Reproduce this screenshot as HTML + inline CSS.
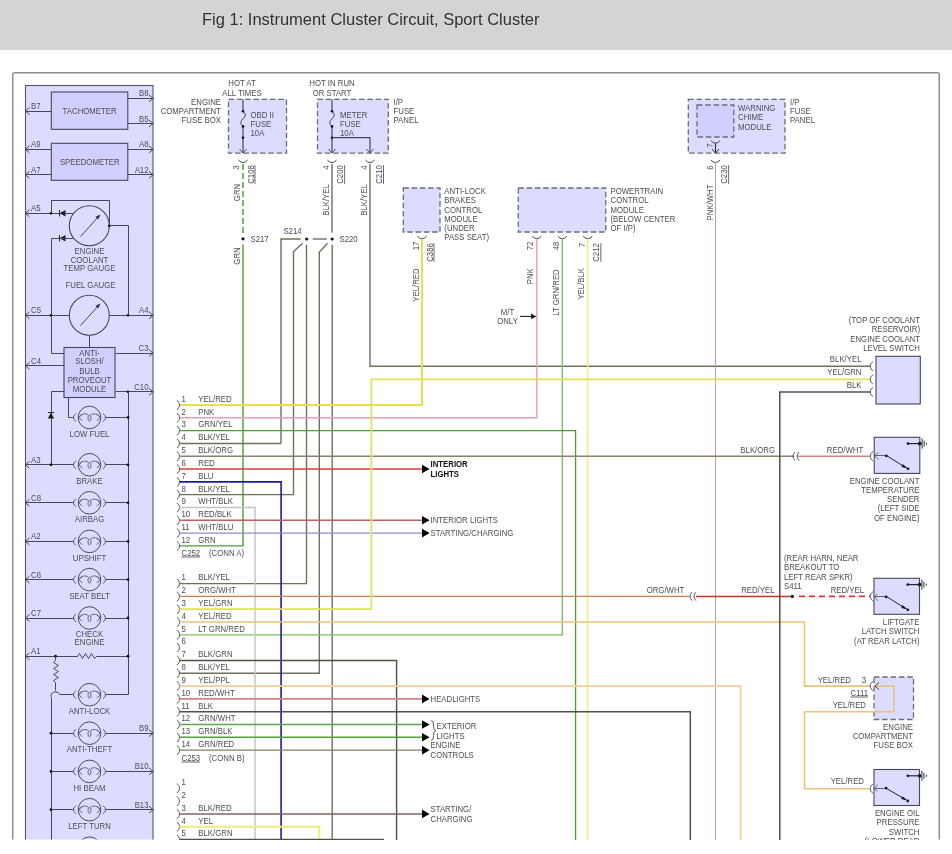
<!DOCTYPE html><html><head><meta charset="utf-8"><style>html,body{margin:0;padding:0;background:#fff;width:952px;height:854px;overflow:hidden}svg{display:block;will-change:transform}text{font-family:"Liberation Sans", sans-serif}</style></head><body>
<svg width="952" height="854" viewBox="0 0 952 854">
<rect x="0" y="0" width="952" height="50" fill="#d4d4d4"/>
<text x="202" y="25" font-size="16.5" fill="#333">Fig 1: Instrument Cluster Circuit, Sport Cluster</text>
<clipPath id="cl"><rect x="0" y="60" width="952" height="779.5"/></clipPath>
<g clip-path="url(#cl)">
<rect x="12.75" y="72.75" width="926.5" height="900" rx="2" fill="none" stroke="#8e8e8e" stroke-width="1.5"/>
<rect x="25.5" y="85.5" width="127.5" height="900" fill="#dcdcff" stroke="#56566c" stroke-width="1.1"/>
<rect x="51.3" y="92" width="76.5" height="37.3" fill="#d0d0fe" stroke="#46465e" stroke-width="1.1"/>
<text transform="translate(89.60,113.53) scale(1,1.08)" text-anchor="middle" font-size="7.8" fill="#4c4c54">TACHOMETER</text>
<rect x="51.3" y="143.3" width="76.5" height="37" fill="#d0d0fe" stroke="#46465e" stroke-width="1.1"/>
<text transform="translate(89.80,164.53) scale(1,1.08)" text-anchor="middle" font-size="7.8" fill="#4c4c54">SPEEDOMETER</text>
<polyline points="127.50,98.50 153.50,98.50" fill="none" stroke="#46465e" stroke-width="1.0" stroke-linejoin="miter" stroke-linecap="butt"/>
<polyline points="149.00,94.90 153.00,98.40 149.00,101.90" fill="none" stroke="#46465e" stroke-width="1" stroke-linejoin="miter" stroke-linecap="butt"/>
<text transform="translate(148.50,96.43) scale(1,1.08)" text-anchor="end" font-size="7.8" fill="#4c4c54">B8</text>
<polyline points="127.50,123.50 153.50,123.50" fill="none" stroke="#46465e" stroke-width="1.0" stroke-linejoin="miter" stroke-linecap="butt"/>
<polyline points="149.00,120.00 153.00,123.50 149.00,127.00" fill="none" stroke="#46465e" stroke-width="1" stroke-linejoin="miter" stroke-linecap="butt"/>
<text transform="translate(148.50,121.53) scale(1,1.08)" text-anchor="end" font-size="7.8" fill="#4c4c54">B5</text>
<polyline points="25.50,111.50 51.50,111.50" fill="none" stroke="#46465e" stroke-width="1.0" stroke-linejoin="miter" stroke-linecap="butt"/>
<polyline points="29.50,107.50 25.50,111.00 29.50,114.50" fill="none" stroke="#46465e" stroke-width="1" stroke-linejoin="miter" stroke-linecap="butt"/>
<text transform="translate(31.00,109.03) scale(1,1.08)" text-anchor="start" font-size="7.8" fill="#4c4c54">B7</text>
<polyline points="25.50,149.50 51.50,149.50" fill="none" stroke="#46465e" stroke-width="1.0" stroke-linejoin="miter" stroke-linecap="butt"/>
<polyline points="29.50,145.80 25.50,149.30 29.50,152.80" fill="none" stroke="#46465e" stroke-width="1" stroke-linejoin="miter" stroke-linecap="butt"/>
<text transform="translate(31.00,147.33) scale(1,1.08)" text-anchor="start" font-size="7.8" fill="#4c4c54">A9</text>
<polyline points="25.50,174.50 51.50,174.50" fill="none" stroke="#46465e" stroke-width="1.0" stroke-linejoin="miter" stroke-linecap="butt"/>
<polyline points="29.50,171.30 25.50,174.80 29.50,178.30" fill="none" stroke="#46465e" stroke-width="1" stroke-linejoin="miter" stroke-linecap="butt"/>
<text transform="translate(31.00,172.83) scale(1,1.08)" text-anchor="start" font-size="7.8" fill="#4c4c54">A7</text>
<polyline points="127.50,149.50 153.50,149.50" fill="none" stroke="#46465e" stroke-width="1.0" stroke-linejoin="miter" stroke-linecap="butt"/>
<polyline points="149.00,145.80 153.00,149.30 149.00,152.80" fill="none" stroke="#46465e" stroke-width="1" stroke-linejoin="miter" stroke-linecap="butt"/>
<text transform="translate(148.50,147.33) scale(1,1.08)" text-anchor="end" font-size="7.8" fill="#4c4c54">A8</text>
<polyline points="127.50,174.50 153.50,174.50" fill="none" stroke="#46465e" stroke-width="1.0" stroke-linejoin="miter" stroke-linecap="butt"/>
<polyline points="149.00,171.30 153.00,174.80 149.00,178.30" fill="none" stroke="#46465e" stroke-width="1" stroke-linejoin="miter" stroke-linecap="butt"/>
<text transform="translate(148.50,172.83) scale(1,1.08)" text-anchor="end" font-size="7.8" fill="#4c4c54">A12</text>
<circle cx="89.3" cy="225.8" r="20" fill="none" stroke="#46465e" stroke-width="1.1"/>
<polyline points="80.50,236.50 99.50,215.50" fill="none" stroke="#46465e" stroke-width="1" stroke-linejoin="miter" stroke-linecap="butt"/>
<path d="M100.5,214.5 L95.5,216.8 L98.2,219.5 Z" fill="#333"/>
<polyline points="51.50,213.50 51.50,200.50 109.50,200.50 109.50,225.50" fill="none" stroke="#46465e" stroke-width="1.0" stroke-linejoin="miter" stroke-linecap="butt"/>
<circle cx="109.30" cy="225.80" r="1.4" fill="#111"/>
<polyline points="25.50,213.50 73.50,213.50" fill="none" stroke="#46465e" stroke-width="1.0" stroke-linejoin="miter" stroke-linecap="butt"/>
<polyline points="29.50,209.80 25.50,213.30 29.50,216.80" fill="none" stroke="#46465e" stroke-width="1" stroke-linejoin="miter" stroke-linecap="butt"/>
<text transform="translate(31.00,211.33) scale(1,1.08)" text-anchor="start" font-size="7.8" fill="#4c4c54">A5</text>
<circle cx="51.00" cy="213.30" r="1.4" fill="#111"/>
<path d="M59.5,213.3 L65.5,210.10000000000002 L65.5,216.5 Z" fill="#222"/>
<polyline points="59.50,210.10 59.50,216.50" fill="none" stroke="#222" stroke-width="1.0" stroke-linejoin="miter" stroke-linecap="butt"/>
<path d="M59.5,238.2 L65.5,235.0 L65.5,241.39999999999998 Z" fill="#222"/>
<polyline points="59.50,235.00 59.50,241.40" fill="none" stroke="#222" stroke-width="1.0" stroke-linejoin="miter" stroke-linecap="butt"/>
<polyline points="73.50,238.50 51.50,238.50 51.50,353.50 64.50,353.50" fill="none" stroke="#46465e" stroke-width="1.0" stroke-linejoin="miter" stroke-linecap="butt"/>
<polyline points="109.50,225.50 128.50,225.50 128.50,315.50" fill="none" stroke="#46465e" stroke-width="1.0" stroke-linejoin="miter" stroke-linecap="butt"/>
<text transform="translate(89.50,254.03) scale(1,1.08)" text-anchor="middle" font-size="7.8" fill="#4c4c54">ENGINE</text>
<text transform="translate(89.50,262.53) scale(1,1.08)" text-anchor="middle" font-size="7.8" fill="#4c4c54">COOLANT</text>
<text transform="translate(89.50,271.03) scale(1,1.08)" text-anchor="middle" font-size="7.8" fill="#4c4c54">TEMP GAUGE</text>
<text transform="translate(90.50,288.03) scale(1,1.08)" text-anchor="middle" font-size="7.8" fill="#4c4c54">FUEL GAUGE</text>
<circle cx="89.3" cy="315.3" r="20" fill="none" stroke="#46465e" stroke-width="1.1"/>
<polyline points="80.50,325.50 99.50,304.50" fill="none" stroke="#46465e" stroke-width="1" stroke-linejoin="miter" stroke-linecap="butt"/>
<path d="M100.5,303.5 L95.5,305.8 L98.2,308.5 Z" fill="#333"/>
<polyline points="25.50,315.50 69.50,315.50" fill="none" stroke="#46465e" stroke-width="1.0" stroke-linejoin="miter" stroke-linecap="butt"/>
<polyline points="29.50,311.80 25.50,315.30 29.50,318.80" fill="none" stroke="#46465e" stroke-width="1" stroke-linejoin="miter" stroke-linecap="butt"/>
<text transform="translate(31.00,313.33) scale(1,1.08)" text-anchor="start" font-size="7.8" fill="#4c4c54">C5</text>
<circle cx="51.00" cy="315.30" r="1.4" fill="#111"/>
<polyline points="109.50,315.50 153.50,315.50" fill="none" stroke="#46465e" stroke-width="1.0" stroke-linejoin="miter" stroke-linecap="butt"/>
<polyline points="149.00,311.80 153.00,315.30 149.00,318.80" fill="none" stroke="#46465e" stroke-width="1" stroke-linejoin="miter" stroke-linecap="butt"/>
<text transform="translate(148.50,313.33) scale(1,1.08)" text-anchor="end" font-size="7.8" fill="#4c4c54">A4</text>
<circle cx="128.00" cy="315.30" r="1.4" fill="#111"/>
<polyline points="89.50,335.50 89.50,347.50" fill="none" stroke="#46465e" stroke-width="1.0" stroke-linejoin="miter" stroke-linecap="butt"/>
<rect x="64" y="347.5" width="51" height="50" fill="#d0d0fe" stroke="#46465e" stroke-width="1.1"/>
<text transform="translate(89.50,356.03) scale(1,1.08)" text-anchor="middle" font-size="7.8" fill="#4c4c54">ANTI-</text>
<text transform="translate(89.50,364.23) scale(1,1.08)" text-anchor="middle" font-size="7.8" fill="#4c4c54">SLOSH/</text>
<text transform="translate(89.50,374.23) scale(1,1.08)" text-anchor="middle" font-size="7.8" fill="#4c4c54">BULB</text>
<text transform="translate(89.50,383.03) scale(1,1.08)" text-anchor="middle" font-size="7.8" fill="#4c4c54">PROVEOUT</text>
<text transform="translate(89.50,391.53) scale(1,1.08)" text-anchor="middle" font-size="7.8" fill="#4c4c54">MODULE</text>
<polyline points="115.50,353.50 153.50,353.50" fill="none" stroke="#46465e" stroke-width="1.0" stroke-linejoin="miter" stroke-linecap="butt"/>
<polyline points="149.00,349.50 153.00,353.00 149.00,356.50" fill="none" stroke="#46465e" stroke-width="1" stroke-linejoin="miter" stroke-linecap="butt"/>
<text transform="translate(148.50,351.03) scale(1,1.08)" text-anchor="end" font-size="7.8" fill="#4c4c54">C3</text>
<polyline points="25.50,365.50 64.50,365.50" fill="none" stroke="#46465e" stroke-width="1.0" stroke-linejoin="miter" stroke-linecap="butt"/>
<polyline points="29.50,362.30 25.50,365.80 29.50,369.30" fill="none" stroke="#46465e" stroke-width="1" stroke-linejoin="miter" stroke-linecap="butt"/>
<text transform="translate(31.00,363.83) scale(1,1.08)" text-anchor="start" font-size="7.8" fill="#4c4c54">C4</text>
<polyline points="115.50,391.50 153.50,391.50" fill="none" stroke="#46465e" stroke-width="1.0" stroke-linejoin="miter" stroke-linecap="butt"/>
<polyline points="149.00,388.30 153.00,391.80 149.00,395.30" fill="none" stroke="#46465e" stroke-width="1" stroke-linejoin="miter" stroke-linecap="butt"/>
<text transform="translate(148.50,389.83) scale(1,1.08)" text-anchor="end" font-size="7.8" fill="#4c4c54">C10</text>
<circle cx="128.00" cy="391.80" r="1.4" fill="#111"/>
<polyline points="64.50,391.50 51.50,391.50 51.50,464.50" fill="none" stroke="#46465e" stroke-width="1.0" stroke-linejoin="miter" stroke-linecap="butt"/>
<path d="M51,412.5 L47.8,418.5 L54.2,418.5 Z" fill="#222"/>
<polyline points="47.90,412.50 54.10,412.50" fill="none" stroke="#222" stroke-width="1.0" stroke-linejoin="miter" stroke-linecap="butt"/>
<polyline points="68.50,397.50 68.50,417.50 73.50,417.50" fill="none" stroke="#46465e" stroke-width="1.0" stroke-linejoin="miter" stroke-linecap="butt"/>
<polyline points="128.50,391.50 128.50,694.50 105.50,694.50" fill="none" stroke="#46465e" stroke-width="1.0" stroke-linejoin="miter" stroke-linecap="butt"/>
<circle cx="89.5" cy="417.5" r="11.3" fill="none" stroke="#4a4a5e" stroke-width="1"/>
<path d="M75.9,413.5 Q71.1,417.5 75.9,421.5" fill="none" stroke="#4a4a5e" stroke-width="0.9"/>
<path d="M103.1,413.5 Q107.9,417.5 103.1,421.5" fill="none" stroke="#4a4a5e" stroke-width="0.9"/>
<path d="M82.2,414.1 L79.0,417.5 L82.2,420.9 M96.8,414.1 L100.0,417.5 L96.8,420.9" fill="none" stroke="#4a4a5e" stroke-width="0.8"/>
<path d="M79.1,417.5 C80.7,413.5 86.1,413.0 88.1,414.9 M90.9,414.9 C92.9,413.0 98.3,413.5 99.9,417.5" fill="none" stroke="#4a4a5e" stroke-width="0.8"/>
<ellipse cx="89.5" cy="418.0" rx="1.5" ry="3.1" fill="none" stroke="#4a4a5e" stroke-width="0.8"/>
<circle cx="89.5" cy="464.8" r="11.3" fill="none" stroke="#4a4a5e" stroke-width="1"/>
<path d="M75.9,460.8 Q71.1,464.8 75.9,468.8" fill="none" stroke="#4a4a5e" stroke-width="0.9"/>
<path d="M103.1,460.8 Q107.9,464.8 103.1,468.8" fill="none" stroke="#4a4a5e" stroke-width="0.9"/>
<path d="M82.2,461.40000000000003 L79.0,464.8 L82.2,468.2 M96.8,461.40000000000003 L100.0,464.8 L96.8,468.2" fill="none" stroke="#4a4a5e" stroke-width="0.8"/>
<path d="M79.1,464.8 C80.7,460.8 86.1,460.3 88.1,462.2 M90.9,462.2 C92.9,460.3 98.3,460.8 99.9,464.8" fill="none" stroke="#4a4a5e" stroke-width="0.8"/>
<ellipse cx="89.5" cy="465.3" rx="1.5" ry="3.1" fill="none" stroke="#4a4a5e" stroke-width="0.8"/>
<circle cx="89.5" cy="502.8" r="11.3" fill="none" stroke="#4a4a5e" stroke-width="1"/>
<path d="M75.9,498.8 Q71.1,502.8 75.9,506.8" fill="none" stroke="#4a4a5e" stroke-width="0.9"/>
<path d="M103.1,498.8 Q107.9,502.8 103.1,506.8" fill="none" stroke="#4a4a5e" stroke-width="0.9"/>
<path d="M82.2,499.40000000000003 L79.0,502.8 L82.2,506.2 M96.8,499.40000000000003 L100.0,502.8 L96.8,506.2" fill="none" stroke="#4a4a5e" stroke-width="0.8"/>
<path d="M79.1,502.8 C80.7,498.8 86.1,498.3 88.1,500.2 M90.9,500.2 C92.9,498.3 98.3,498.8 99.9,502.8" fill="none" stroke="#4a4a5e" stroke-width="0.8"/>
<ellipse cx="89.5" cy="503.3" rx="1.5" ry="3.1" fill="none" stroke="#4a4a5e" stroke-width="0.8"/>
<circle cx="89.5" cy="541.4" r="11.3" fill="none" stroke="#4a4a5e" stroke-width="1"/>
<path d="M75.9,537.4 Q71.1,541.4 75.9,545.4" fill="none" stroke="#4a4a5e" stroke-width="0.9"/>
<path d="M103.1,537.4 Q107.9,541.4 103.1,545.4" fill="none" stroke="#4a4a5e" stroke-width="0.9"/>
<path d="M82.2,538.0 L79.0,541.4 L82.2,544.8 M96.8,538.0 L100.0,541.4 L96.8,544.8" fill="none" stroke="#4a4a5e" stroke-width="0.8"/>
<path d="M79.1,541.4 C80.7,537.4 86.1,536.9 88.1,538.8 M90.9,538.8 C92.9,536.9 98.3,537.4 99.9,541.4" fill="none" stroke="#4a4a5e" stroke-width="0.8"/>
<ellipse cx="89.5" cy="541.9" rx="1.5" ry="3.1" fill="none" stroke="#4a4a5e" stroke-width="0.8"/>
<circle cx="89.5" cy="579.6" r="11.3" fill="none" stroke="#4a4a5e" stroke-width="1"/>
<path d="M75.9,575.6 Q71.1,579.6 75.9,583.6" fill="none" stroke="#4a4a5e" stroke-width="0.9"/>
<path d="M103.1,575.6 Q107.9,579.6 103.1,583.6" fill="none" stroke="#4a4a5e" stroke-width="0.9"/>
<path d="M82.2,576.2 L79.0,579.6 L82.2,583.0 M96.8,576.2 L100.0,579.6 L96.8,583.0" fill="none" stroke="#4a4a5e" stroke-width="0.8"/>
<path d="M79.1,579.6 C80.7,575.6 86.1,575.1 88.1,577.0 M90.9,577.0 C92.9,575.1 98.3,575.6 99.9,579.6" fill="none" stroke="#4a4a5e" stroke-width="0.8"/>
<ellipse cx="89.5" cy="580.1" rx="1.5" ry="3.1" fill="none" stroke="#4a4a5e" stroke-width="0.8"/>
<circle cx="89.5" cy="618" r="11.3" fill="none" stroke="#4a4a5e" stroke-width="1"/>
<path d="M75.9,614 Q71.1,618 75.9,622" fill="none" stroke="#4a4a5e" stroke-width="0.9"/>
<path d="M103.1,614 Q107.9,618 103.1,622" fill="none" stroke="#4a4a5e" stroke-width="0.9"/>
<path d="M82.2,614.6 L79.0,618 L82.2,621.4 M96.8,614.6 L100.0,618 L96.8,621.4" fill="none" stroke="#4a4a5e" stroke-width="0.8"/>
<path d="M79.1,618 C80.7,614 86.1,613.5 88.1,615.4 M90.9,615.4 C92.9,613.5 98.3,614 99.9,618" fill="none" stroke="#4a4a5e" stroke-width="0.8"/>
<ellipse cx="89.5" cy="618.5" rx="1.5" ry="3.1" fill="none" stroke="#4a4a5e" stroke-width="0.8"/>
<circle cx="89.5" cy="694.7" r="11.3" fill="none" stroke="#4a4a5e" stroke-width="1"/>
<path d="M75.9,690.7 Q71.1,694.7 75.9,698.7" fill="none" stroke="#4a4a5e" stroke-width="0.9"/>
<path d="M103.1,690.7 Q107.9,694.7 103.1,698.7" fill="none" stroke="#4a4a5e" stroke-width="0.9"/>
<path d="M82.2,691.3000000000001 L79.0,694.7 L82.2,698.1 M96.8,691.3000000000001 L100.0,694.7 L96.8,698.1" fill="none" stroke="#4a4a5e" stroke-width="0.8"/>
<path d="M79.1,694.7 C80.7,690.7 86.1,690.2 88.1,692.1 M90.9,692.1 C92.9,690.2 98.3,690.7 99.9,694.7" fill="none" stroke="#4a4a5e" stroke-width="0.8"/>
<ellipse cx="89.5" cy="695.2" rx="1.5" ry="3.1" fill="none" stroke="#4a4a5e" stroke-width="0.8"/>
<circle cx="89.5" cy="733.2" r="11.3" fill="none" stroke="#4a4a5e" stroke-width="1"/>
<path d="M75.9,729.2 Q71.1,733.2 75.9,737.2" fill="none" stroke="#4a4a5e" stroke-width="0.9"/>
<path d="M103.1,729.2 Q107.9,733.2 103.1,737.2" fill="none" stroke="#4a4a5e" stroke-width="0.9"/>
<path d="M82.2,729.8000000000001 L79.0,733.2 L82.2,736.6 M96.8,729.8000000000001 L100.0,733.2 L96.8,736.6" fill="none" stroke="#4a4a5e" stroke-width="0.8"/>
<path d="M79.1,733.2 C80.7,729.2 86.1,728.7 88.1,730.6 M90.9,730.6 C92.9,728.7 98.3,729.2 99.9,733.2" fill="none" stroke="#4a4a5e" stroke-width="0.8"/>
<ellipse cx="89.5" cy="733.7" rx="1.5" ry="3.1" fill="none" stroke="#4a4a5e" stroke-width="0.8"/>
<circle cx="89.5" cy="771.4" r="11.3" fill="none" stroke="#4a4a5e" stroke-width="1"/>
<path d="M75.9,767.4 Q71.1,771.4 75.9,775.4" fill="none" stroke="#4a4a5e" stroke-width="0.9"/>
<path d="M103.1,767.4 Q107.9,771.4 103.1,775.4" fill="none" stroke="#4a4a5e" stroke-width="0.9"/>
<path d="M82.2,768.0 L79.0,771.4 L82.2,774.8 M96.8,768.0 L100.0,771.4 L96.8,774.8" fill="none" stroke="#4a4a5e" stroke-width="0.8"/>
<path d="M79.1,771.4 C80.7,767.4 86.1,766.9 88.1,768.8 M90.9,768.8 C92.9,766.9 98.3,767.4 99.9,771.4" fill="none" stroke="#4a4a5e" stroke-width="0.8"/>
<ellipse cx="89.5" cy="771.9" rx="1.5" ry="3.1" fill="none" stroke="#4a4a5e" stroke-width="0.8"/>
<circle cx="89.5" cy="809.7" r="11.3" fill="none" stroke="#4a4a5e" stroke-width="1"/>
<path d="M75.9,805.7 Q71.1,809.7 75.9,813.7" fill="none" stroke="#4a4a5e" stroke-width="0.9"/>
<path d="M103.1,805.7 Q107.9,809.7 103.1,813.7" fill="none" stroke="#4a4a5e" stroke-width="0.9"/>
<path d="M82.2,806.3000000000001 L79.0,809.7 L82.2,813.1 M96.8,806.3000000000001 L100.0,809.7 L96.8,813.1" fill="none" stroke="#4a4a5e" stroke-width="0.8"/>
<path d="M79.1,809.7 C80.7,805.7 86.1,805.2 88.1,807.1 M90.9,807.1 C92.9,805.2 98.3,805.7 99.9,809.7" fill="none" stroke="#4a4a5e" stroke-width="0.8"/>
<ellipse cx="89.5" cy="810.2" rx="1.5" ry="3.1" fill="none" stroke="#4a4a5e" stroke-width="0.8"/>
<circle cx="89.5" cy="848.2" r="11.3" fill="none" stroke="#4a4a5e" stroke-width="1"/>
<path d="M75.9,844.2 Q71.1,848.2 75.9,852.2" fill="none" stroke="#4a4a5e" stroke-width="0.9"/>
<path d="M103.1,844.2 Q107.9,848.2 103.1,852.2" fill="none" stroke="#4a4a5e" stroke-width="0.9"/>
<path d="M82.2,844.8000000000001 L79.0,848.2 L82.2,851.6 M96.8,844.8000000000001 L100.0,848.2 L96.8,851.6" fill="none" stroke="#4a4a5e" stroke-width="0.8"/>
<path d="M79.1,848.2 C80.7,844.2 86.1,843.7 88.1,845.6 M90.9,845.6 C92.9,843.7 98.3,844.2 99.9,848.2" fill="none" stroke="#4a4a5e" stroke-width="0.8"/>
<ellipse cx="89.5" cy="848.7" rx="1.5" ry="3.1" fill="none" stroke="#4a4a5e" stroke-width="0.8"/>
<polyline points="105.50,417.50 128.50,417.50" fill="none" stroke="#46465e" stroke-width="1.0" stroke-linejoin="miter" stroke-linecap="butt"/>
<circle cx="128.00" cy="417.50" r="1.4" fill="#111"/>
<polyline points="105.50,464.50 128.50,464.50" fill="none" stroke="#46465e" stroke-width="1.0" stroke-linejoin="miter" stroke-linecap="butt"/>
<circle cx="128.00" cy="464.80" r="1.4" fill="#111"/>
<polyline points="105.50,502.50 128.50,502.50" fill="none" stroke="#46465e" stroke-width="1.0" stroke-linejoin="miter" stroke-linecap="butt"/>
<circle cx="128.00" cy="502.80" r="1.4" fill="#111"/>
<polyline points="105.50,541.50 128.50,541.50" fill="none" stroke="#46465e" stroke-width="1.0" stroke-linejoin="miter" stroke-linecap="butt"/>
<circle cx="128.00" cy="541.40" r="1.4" fill="#111"/>
<polyline points="105.50,579.50 128.50,579.50" fill="none" stroke="#46465e" stroke-width="1.0" stroke-linejoin="miter" stroke-linecap="butt"/>
<circle cx="128.00" cy="579.60" r="1.4" fill="#111"/>
<polyline points="105.50,618.50 128.50,618.50" fill="none" stroke="#46465e" stroke-width="1.0" stroke-linejoin="miter" stroke-linecap="butt"/>
<circle cx="128.00" cy="618.00" r="1.4" fill="#111"/>
<polyline points="25.50,464.50 73.50,464.50" fill="none" stroke="#46465e" stroke-width="1.0" stroke-linejoin="miter" stroke-linecap="butt"/>
<polyline points="29.50,461.30 25.50,464.80 29.50,468.30" fill="none" stroke="#46465e" stroke-width="1" stroke-linejoin="miter" stroke-linecap="butt"/>
<text transform="translate(31.00,462.83) scale(1,1.08)" text-anchor="start" font-size="7.8" fill="#4c4c54">A3</text>
<polyline points="25.50,502.50 73.50,502.50" fill="none" stroke="#46465e" stroke-width="1.0" stroke-linejoin="miter" stroke-linecap="butt"/>
<polyline points="29.50,499.30 25.50,502.80 29.50,506.30" fill="none" stroke="#46465e" stroke-width="1" stroke-linejoin="miter" stroke-linecap="butt"/>
<text transform="translate(31.00,500.83) scale(1,1.08)" text-anchor="start" font-size="7.8" fill="#4c4c54">C8</text>
<polyline points="25.50,541.50 73.50,541.50" fill="none" stroke="#46465e" stroke-width="1.0" stroke-linejoin="miter" stroke-linecap="butt"/>
<polyline points="29.50,537.90 25.50,541.40 29.50,544.90" fill="none" stroke="#46465e" stroke-width="1" stroke-linejoin="miter" stroke-linecap="butt"/>
<text transform="translate(31.00,539.43) scale(1,1.08)" text-anchor="start" font-size="7.8" fill="#4c4c54">A2</text>
<polyline points="25.50,579.50 73.50,579.50" fill="none" stroke="#46465e" stroke-width="1.0" stroke-linejoin="miter" stroke-linecap="butt"/>
<polyline points="29.50,576.10 25.50,579.60 29.50,583.10" fill="none" stroke="#46465e" stroke-width="1" stroke-linejoin="miter" stroke-linecap="butt"/>
<text transform="translate(31.00,577.63) scale(1,1.08)" text-anchor="start" font-size="7.8" fill="#4c4c54">C6</text>
<polyline points="25.50,618.50 73.50,618.50" fill="none" stroke="#46465e" stroke-width="1.0" stroke-linejoin="miter" stroke-linecap="butt"/>
<polyline points="29.50,614.50 25.50,618.00 29.50,621.50" fill="none" stroke="#46465e" stroke-width="1" stroke-linejoin="miter" stroke-linecap="butt"/>
<text transform="translate(31.00,616.03) scale(1,1.08)" text-anchor="start" font-size="7.8" fill="#4c4c54">C7</text>
<circle cx="51.00" cy="464.80" r="1.4" fill="#111"/>
<text transform="translate(89.50,437.03) scale(1,1.08)" text-anchor="middle" font-size="7.8" fill="#4c4c54">LOW FUEL</text>
<text transform="translate(89.50,484.03) scale(1,1.08)" text-anchor="middle" font-size="7.8" fill="#4c4c54">BRAKE</text>
<text transform="translate(89.50,522.03) scale(1,1.08)" text-anchor="middle" font-size="7.8" fill="#4c4c54">AIRBAG</text>
<text transform="translate(89.50,560.53) scale(1,1.08)" text-anchor="middle" font-size="7.8" fill="#4c4c54">UPSHIFT</text>
<text transform="translate(89.50,598.53) scale(1,1.08)" text-anchor="middle" font-size="7.8" fill="#4c4c54">SEAT BELT</text>
<text transform="translate(89.50,636.78) scale(1,1.08)" text-anchor="middle" font-size="7.8" fill="#4c4c54">CHECK</text>
<text transform="translate(89.50,644.53) scale(1,1.08)" text-anchor="middle" font-size="7.8" fill="#4c4c54">ENGINE</text>
<text transform="translate(89.50,713.53) scale(1,1.08)" text-anchor="middle" font-size="7.8" fill="#4c4c54">ANTI-LOCK</text>
<text transform="translate(89.50,751.78) scale(1,1.08)" text-anchor="middle" font-size="7.8" fill="#4c4c54">ANTI-THEFT</text>
<text transform="translate(89.50,790.53) scale(1,1.08)" text-anchor="middle" font-size="7.8" fill="#4c4c54">HI BEAM</text>
<text transform="translate(89.50,828.78) scale(1,1.08)" text-anchor="middle" font-size="7.8" fill="#4c4c54">LEFT TURN</text>
<polyline points="25.50,656.50 77.50,656.50 79.50,653.50 82.50,658.50 85.50,653.50 88.50,658.50 91.50,653.50 94.50,658.50 96.50,656.50 128.50,656.50" fill="none" stroke="#46465e" stroke-width="1.0" stroke-linejoin="miter" stroke-linecap="butt"/>
<polyline points="29.50,652.75 25.50,656.25 29.50,659.75" fill="none" stroke="#46465e" stroke-width="1" stroke-linejoin="miter" stroke-linecap="butt"/>
<text transform="translate(31.00,654.28) scale(1,1.08)" text-anchor="start" font-size="7.8" fill="#4c4c54">A1</text>
<circle cx="55.50" cy="656.25" r="1.4" fill="#111"/>
<circle cx="128.00" cy="656.25" r="1.4" fill="#111"/>
<polyline points="55.50,656.50 55.50,660.50 53.50,662.50 58.50,665.50 53.50,668.50 58.50,671.50 53.50,674.50 58.50,677.50 53.50,680.50 55.50,682.50 55.50,690.50" fill="none" stroke="#46465e" stroke-width="1.0" stroke-linejoin="miter" stroke-linecap="butt"/>
<path d="M51,697 L51,694.5 Q55.5,689 60,694.5 L73.5,694.5" fill="none" stroke="#46465e" stroke-width="1.0"/>
<polyline points="51.50,697.50 51.50,900.50" fill="none" stroke="#46465e" stroke-width="1.0" stroke-linejoin="miter" stroke-linecap="butt"/>
<polyline points="51.50,733.50 73.50,733.50" fill="none" stroke="#46465e" stroke-width="1.0" stroke-linejoin="miter" stroke-linecap="butt"/>
<circle cx="51.00" cy="733.20" r="1.4" fill="#111"/>
<polyline points="105.50,733.50 153.50,733.50" fill="none" stroke="#46465e" stroke-width="1.0" stroke-linejoin="miter" stroke-linecap="butt"/>
<polyline points="149.00,729.70 153.00,733.20 149.00,736.70" fill="none" stroke="#46465e" stroke-width="1" stroke-linejoin="miter" stroke-linecap="butt"/>
<text transform="translate(148.50,731.23) scale(1,1.08)" text-anchor="end" font-size="7.8" fill="#4c4c54">B9</text>
<polyline points="51.50,771.50 73.50,771.50" fill="none" stroke="#46465e" stroke-width="1.0" stroke-linejoin="miter" stroke-linecap="butt"/>
<circle cx="51.00" cy="771.40" r="1.4" fill="#111"/>
<polyline points="105.50,771.50 153.50,771.50" fill="none" stroke="#46465e" stroke-width="1.0" stroke-linejoin="miter" stroke-linecap="butt"/>
<polyline points="149.00,767.90 153.00,771.40 149.00,774.90" fill="none" stroke="#46465e" stroke-width="1" stroke-linejoin="miter" stroke-linecap="butt"/>
<text transform="translate(148.50,769.43) scale(1,1.08)" text-anchor="end" font-size="7.8" fill="#4c4c54">B10</text>
<polyline points="51.50,809.50 73.50,809.50" fill="none" stroke="#46465e" stroke-width="1.0" stroke-linejoin="miter" stroke-linecap="butt"/>
<circle cx="51.00" cy="809.70" r="1.4" fill="#111"/>
<polyline points="105.50,809.50 153.50,809.50" fill="none" stroke="#46465e" stroke-width="1.0" stroke-linejoin="miter" stroke-linecap="butt"/>
<polyline points="149.00,806.20 153.00,809.70 149.00,813.20" fill="none" stroke="#46465e" stroke-width="1" stroke-linejoin="miter" stroke-linecap="butt"/>
<text transform="translate(148.50,807.73) scale(1,1.08)" text-anchor="end" font-size="7.8" fill="#4c4c54">B13</text>
<polyline points="51.50,848.50 73.50,848.50" fill="none" stroke="#46465e" stroke-width="1.0" stroke-linejoin="miter" stroke-linecap="butt"/>
<circle cx="51.00" cy="848.20" r="1.4" fill="#111"/>
<polyline points="105.50,848.50 153.50,848.50" fill="none" stroke="#46465e" stroke-width="1.0" stroke-linejoin="miter" stroke-linecap="butt"/>
<polyline points="149.00,844.70 153.00,848.20 149.00,851.70" fill="none" stroke="#46465e" stroke-width="1" stroke-linejoin="miter" stroke-linecap="butt"/>
<rect x="228.5" y="99.4" width="58" height="53.8" fill="#dcdcff" stroke="#6a6a7c" stroke-width="1.3" stroke-dasharray="5.5,2.8"/>
<text transform="translate(242.00,86.03) scale(1,1.08)" text-anchor="middle" font-size="7.8" fill="#4c4c54">HOT AT</text>
<text transform="translate(242.00,96.03) scale(1,1.08)" text-anchor="middle" font-size="7.8" fill="#4c4c54">ALL TIMES</text>
<text transform="translate(221.00,105.03) scale(1,1.08)" text-anchor="end" font-size="7.8" fill="#4c4c54">ENGINE</text>
<text transform="translate(221.00,114.03) scale(1,1.08)" text-anchor="end" font-size="7.8" fill="#4c4c54">COMPARTMENT</text>
<text transform="translate(221.00,123.03) scale(1,1.08)" text-anchor="end" font-size="7.8" fill="#4c4c54">FUSE BOX</text>
<polyline points="243.00,99.40 243.00,111.30" fill="none" stroke="#46465e" stroke-width="1.2" stroke-linejoin="miter" stroke-linecap="butt"/>
<path d="M243,111.3 Q247.5,115 243,118.8 Q238.5,122.6 243,126.4" fill="none" stroke="#46465e" stroke-width="1"/>
<polyline points="243.00,126.40 243.00,153.00" fill="none" stroke="#46465e" stroke-width="1.2" stroke-linejoin="miter" stroke-linecap="butt"/>
<circle cx="243.00" cy="111.30" r="1.3" fill="#111"/>
<circle cx="243.00" cy="126.40" r="1.3" fill="#111"/>
<circle cx="243.00" cy="137.70" r="1.3" fill="#111"/>
<polyline points="239.50,149.00 243.00,153.00 246.50,149.00" fill="none" stroke="#46465e" stroke-width="1" stroke-linejoin="miter" stroke-linecap="butt"/>
<text transform="translate(250.50,117.53) scale(1,1.08)" text-anchor="start" font-size="7.8" fill="#4c4c54">OBD II</text>
<text transform="translate(250.50,126.53) scale(1,1.08)" text-anchor="start" font-size="7.8" fill="#4c4c54">FUSE</text>
<text transform="translate(250.50,135.53) scale(1,1.08)" text-anchor="start" font-size="7.8" fill="#4c4c54">10A</text>
<path d="M238.4,160.0 Q243,165.2 247.6,160.0" fill="none" stroke="#333" stroke-width="0.9"/>
<text transform="translate(239.03,167.50) rotate(-90) scale(1,1.08)" text-anchor="middle" font-size="7.8" fill="#4c4c54">3</text>
<text transform="translate(253.53,174.50) rotate(-90) scale(1,1.08)" text-anchor="middle" font-size="7.8" fill="#4c4c54" text-decoration="underline">C108</text>
<polyline points="243.00,164.00 243.00,233.00" fill="none" stroke="#4c9e38" stroke-width="1.5" stroke-dasharray="6,3" stroke-linejoin="miter" stroke-linecap="butt"/>
<text transform="translate(239.53,192.50) rotate(-90) scale(1,1.08)" text-anchor="middle" font-size="7.8" fill="#4c4c54">GRN</text>
<circle cx="243.00" cy="238.80" r="1.6" fill="#111"/>
<text transform="translate(250.50,241.83) scale(1,1.08)" text-anchor="start" font-size="7.8" fill="#4c4c54">S217</text>
<polyline points="243.00,244.50 243.00,545.91 179.50,545.91" fill="none" stroke="#4c9e38" stroke-width="1.4" stroke-linejoin="miter" stroke-linecap="butt"/>
<text transform="translate(239.53,256.00) rotate(-90) scale(1,1.08)" text-anchor="middle" font-size="7.8" fill="#4c4c54">GRN</text>
<rect x="317.5" y="99.4" width="70.8" height="53.8" fill="#dcdcff" stroke="#6a6a7c" stroke-width="1.3" stroke-dasharray="5.5,2.8"/>
<text transform="translate(332.00,86.03) scale(1,1.08)" text-anchor="middle" font-size="7.8" fill="#4c4c54">HOT IN RUN</text>
<text transform="translate(332.00,96.03) scale(1,1.08)" text-anchor="middle" font-size="7.8" fill="#4c4c54">OR START</text>
<text transform="translate(393.50,105.03) scale(1,1.08)" text-anchor="start" font-size="7.8" fill="#4c4c54">I/P</text>
<text transform="translate(393.50,114.03) scale(1,1.08)" text-anchor="start" font-size="7.8" fill="#4c4c54">FUSE</text>
<text transform="translate(393.50,123.03) scale(1,1.08)" text-anchor="start" font-size="7.8" fill="#4c4c54">PANEL</text>
<polyline points="332.00,99.40 332.00,111.30" fill="none" stroke="#46465e" stroke-width="1.2" stroke-linejoin="miter" stroke-linecap="butt"/>
<path d="M332,111.3 Q336.5,115 332,118.8 Q327.5,122.6 332,126.4" fill="none" stroke="#46465e" stroke-width="1"/>
<polyline points="332.00,126.40 332.00,153.00" fill="none" stroke="#46465e" stroke-width="1.2" stroke-linejoin="miter" stroke-linecap="butt"/>
<circle cx="332.00" cy="111.30" r="1.3" fill="#111"/>
<circle cx="332.00" cy="126.40" r="1.3" fill="#111"/>
<circle cx="332.00" cy="137.70" r="1.3" fill="#111"/>
<polyline points="328.50,149.00 332.00,153.00 335.50,149.00" fill="none" stroke="#46465e" stroke-width="1" stroke-linejoin="miter" stroke-linecap="butt"/>
<polyline points="332.00,137.70 370.00,137.70 370.00,153.00" fill="none" stroke="#46465e" stroke-width="1.2" stroke-linejoin="miter" stroke-linecap="butt"/>
<polyline points="366.50,149.00 370.00,153.00 373.50,149.00" fill="none" stroke="#46465e" stroke-width="1" stroke-linejoin="miter" stroke-linecap="butt"/>
<text transform="translate(340.00,117.53) scale(1,1.08)" text-anchor="start" font-size="7.8" fill="#4c4c54">METER</text>
<text transform="translate(340.00,126.53) scale(1,1.08)" text-anchor="start" font-size="7.8" fill="#4c4c54">FUSE</text>
<text transform="translate(340.00,135.53) scale(1,1.08)" text-anchor="start" font-size="7.8" fill="#4c4c54">10A</text>
<path d="M327.4,160.0 Q332,165.2 336.6,160.0" fill="none" stroke="#333" stroke-width="0.9"/>
<path d="M365.4,160.0 Q370,165.2 374.6,160.0" fill="none" stroke="#333" stroke-width="0.9"/>
<text transform="translate(328.53,167.50) rotate(-90) scale(1,1.08)" text-anchor="middle" font-size="7.8" fill="#4c4c54">4</text>
<text transform="translate(343.23,174.50) rotate(-90) scale(1,1.08)" text-anchor="middle" font-size="7.8" fill="#4c4c54" text-decoration="underline">C200</text>
<text transform="translate(366.53,167.50) rotate(-90) scale(1,1.08)" text-anchor="middle" font-size="7.8" fill="#4c4c54">4</text>
<text transform="translate(382.03,174.50) rotate(-90) scale(1,1.08)" text-anchor="middle" font-size="7.8" fill="#4c4c54" text-decoration="underline">C210</text>
<text transform="translate(328.53,200.00) rotate(-90) scale(1,1.08)" text-anchor="middle" font-size="7.8" fill="#4c4c54">BLK/YEL</text>
<text transform="translate(366.53,200.00) rotate(-90) scale(1,1.08)" text-anchor="middle" font-size="7.8" fill="#4c4c54">BLK/YEL</text>
<polyline points="332.00,164.00 332.00,232.60" fill="none" stroke="#72705a" stroke-width="1.4" stroke-linejoin="miter" stroke-linecap="butt"/>
<circle cx="332.20" cy="239.00" r="1.6" fill="#111"/>
<circle cx="306.70" cy="239.00" r="1.6" fill="#111"/>
<text transform="translate(283.40,234.03) scale(1,1.08)" text-anchor="start" font-size="7.8" fill="#4c4c54">S214</text>
<text transform="translate(339.50,242.03) scale(1,1.08)" text-anchor="start" font-size="7.8" fill="#4c4c54">S220</text>
<polyline points="281.00,443.43 281.00,239.00 300.60,239.00" fill="none" stroke="#72705a" stroke-width="1.4" stroke-linejoin="miter" stroke-linecap="butt"/>
<polyline points="312.70,239.00 326.90,239.00" fill="none" stroke="#72705a" stroke-width="1.4" stroke-linejoin="miter" stroke-linecap="butt"/>
<polyline points="179.50,494.67 293.50,494.67 293.50,251.50 302.70,243.20" fill="none" stroke="#72705a" stroke-width="1.4" stroke-linejoin="miter" stroke-linecap="butt"/>
<polyline points="179.50,583.60 306.50,583.60 306.50,244.80" fill="none" stroke="#72705a" stroke-width="1.4" stroke-linejoin="miter" stroke-linecap="butt"/>
<polyline points="179.50,673.27 319.30,673.27 319.30,252.00 327.50,243.20" fill="none" stroke="#72705a" stroke-width="1.4" stroke-linejoin="miter" stroke-linecap="butt"/>
<polyline points="332.20,244.80 332.20,900.00" fill="none" stroke="#72705a" stroke-width="1.4" stroke-linejoin="miter" stroke-linecap="butt"/>
<polyline points="370.00,164.00 370.00,366.25 870.00,366.25" fill="none" stroke="#72705a" stroke-width="1.4" stroke-linejoin="miter" stroke-linecap="butt"/>
<polyline points="179.50,443.43 281.00,443.43" fill="none" stroke="#72705a" stroke-width="1.4" stroke-linejoin="miter" stroke-linecap="butt"/>
<rect x="403.3" y="188" width="36.7" height="44" fill="#dcdcff" stroke="#6a6a7c" stroke-width="1.3" stroke-dasharray="5.5,2.8"/>
<text transform="translate(444.30,194.33) scale(1,1.08)" text-anchor="start" font-size="7.8" fill="#4c4c54">ANTI-LOCK</text>
<text transform="translate(444.30,203.48) scale(1,1.08)" text-anchor="start" font-size="7.8" fill="#4c4c54">BRAKES</text>
<text transform="translate(444.30,212.63) scale(1,1.08)" text-anchor="start" font-size="7.8" fill="#4c4c54">CONTROL</text>
<text transform="translate(444.30,221.78) scale(1,1.08)" text-anchor="start" font-size="7.8" fill="#4c4c54">MODULE</text>
<text transform="translate(444.30,230.93) scale(1,1.08)" text-anchor="start" font-size="7.8" fill="#4c4c54">(UNDER</text>
<text transform="translate(444.30,240.08) scale(1,1.08)" text-anchor="start" font-size="7.8" fill="#4c4c54">PASS SEAT)</text>
<path d="M417.4,236.20000000000002 Q422,241.4 426.6,236.20000000000002" fill="none" stroke="#333" stroke-width="0.9"/>
<text transform="translate(418.83,246.00) rotate(-90) scale(1,1.08)" text-anchor="middle" font-size="7.8" fill="#4c4c54">17</text>
<text transform="translate(432.53,252.50) rotate(-90) scale(1,1.08)" text-anchor="middle" font-size="7.8" fill="#4c4c54" text-decoration="underline">C386</text>
<text transform="translate(418.83,285.00) rotate(-90) scale(1,1.08)" text-anchor="middle" font-size="7.8" fill="#4c4c54">YEL/RED</text>
<polyline points="422.00,238.80 422.00,405.00 179.50,405.00" fill="none" stroke="#e6e04a" stroke-width="1.9" stroke-linejoin="miter" stroke-linecap="butt"/>
<rect x="518.3" y="188" width="87.5" height="44" fill="#dcdcff" stroke="#6a6a7c" stroke-width="1.3" stroke-dasharray="5.5,2.8"/>
<text transform="translate(610.50,194.33) scale(1,1.08)" text-anchor="start" font-size="7.8" fill="#4c4c54">POWERTRAIN</text>
<text transform="translate(610.50,203.48) scale(1,1.08)" text-anchor="start" font-size="7.8" fill="#4c4c54">CONTROL</text>
<text transform="translate(610.50,212.63) scale(1,1.08)" text-anchor="start" font-size="7.8" fill="#4c4c54">MODULE</text>
<text transform="translate(610.50,221.78) scale(1,1.08)" text-anchor="start" font-size="7.8" fill="#4c4c54">(BELOW CENTER</text>
<text transform="translate(610.50,230.93) scale(1,1.08)" text-anchor="start" font-size="7.8" fill="#4c4c54">OF I/P)</text>
<path d="M532.1999999999999,236.20000000000002 Q536.8,241.4 541.4,236.20000000000002" fill="none" stroke="#333" stroke-width="0.9"/>
<path d="M557.6999999999999,236.20000000000002 Q562.3,241.4 566.9,236.20000000000002" fill="none" stroke="#333" stroke-width="0.9"/>
<path d="M583.1,236.20000000000002 Q587.7,241.4 592.3000000000001,236.20000000000002" fill="none" stroke="#333" stroke-width="0.9"/>
<text transform="translate(533.33,246.00) rotate(-90) scale(1,1.08)" text-anchor="middle" font-size="7.8" fill="#4c4c54">72</text>
<text transform="translate(559.03,246.00) rotate(-90) scale(1,1.08)" text-anchor="middle" font-size="7.8" fill="#4c4c54">48</text>
<text transform="translate(585.03,245.00) rotate(-90) scale(1,1.08)" text-anchor="middle" font-size="7.8" fill="#4c4c54">7</text>
<text transform="translate(599.43,252.50) rotate(-90) scale(1,1.08)" text-anchor="middle" font-size="7.8" fill="#4c4c54" text-decoration="underline">C212</text>
<text transform="translate(533.33,276.30) rotate(-90) scale(1,1.08)" text-anchor="middle" font-size="7.8" fill="#4c4c54">PNK</text>
<text transform="translate(559.03,292.50) rotate(-90) scale(1,1.08)" text-anchor="middle" font-size="7.8" fill="#4c4c54">LT GRN/RED</text>
<text transform="translate(584.33,283.80) rotate(-90) scale(1,1.08)" text-anchor="middle" font-size="7.8" fill="#4c4c54">YEL/BLK</text>
<polyline points="536.80,238.80 536.80,417.81 179.50,417.81" fill="none" stroke="#e0a0bc" stroke-width="1.4" stroke-linejoin="miter" stroke-linecap="butt"/>
<polyline points="562.30,238.80 562.30,634.84 179.50,634.84" fill="none" stroke="#7cc460" stroke-width="1.4" stroke-linejoin="miter" stroke-linecap="butt"/>
<polyline points="587.70,238.80 587.70,900.00" fill="none" stroke="#f0ee70" stroke-width="1.4" stroke-linejoin="miter" stroke-linecap="butt"/>
<text transform="translate(507.50,315.03) scale(1,1.08)" text-anchor="middle" font-size="7.8" fill="#4c4c54">M/T</text>
<text transform="translate(507.50,324.03) scale(1,1.08)" text-anchor="middle" font-size="7.8" fill="#4c4c54">ONLY</text>
<polyline points="520.00,316.40 533.00,316.40" fill="none" stroke="#222" stroke-width="1.1" stroke-linejoin="miter" stroke-linecap="butt"/>
<path d="M536.5,316.4 L531,313.6 L531,319.2 Z" fill="#222"/>
<rect x="688.3" y="99.4" width="96.7" height="53.8" fill="#dcdcff" stroke="#6a6a7c" stroke-width="1.3" stroke-dasharray="5.5,2.8"/>
<rect x="697" y="105" width="36.8" height="32" fill="#d0d0fe" stroke="#6a6a7c" stroke-width="1.3" stroke-dasharray="5.5,2.8"/>
<text transform="translate(738.00,111.33) scale(1,1.08)" text-anchor="start" font-size="7.8" fill="#4c4c54">WARNING</text>
<text transform="translate(738.00,120.33) scale(1,1.08)" text-anchor="start" font-size="7.8" fill="#4c4c54">CHIME</text>
<text transform="translate(738.00,129.63) scale(1,1.08)" text-anchor="start" font-size="7.8" fill="#4c4c54">MODULE</text>
<text transform="translate(790.00,105.03) scale(1,1.08)" text-anchor="start" font-size="7.8" fill="#4c4c54">I/P</text>
<text transform="translate(790.00,114.03) scale(1,1.08)" text-anchor="start" font-size="7.8" fill="#4c4c54">FUSE</text>
<text transform="translate(790.00,123.03) scale(1,1.08)" text-anchor="start" font-size="7.8" fill="#4c4c54">PANEL</text>
<path d="M710.9,140.6 Q715.5,145.79999999999998 720.1,140.6" fill="none" stroke="#333" stroke-width="0.9"/>
<polyline points="715.50,143.20 715.50,153.00" fill="none" stroke="#333" stroke-width="1.2" stroke-linejoin="miter" stroke-linecap="butt"/>
<polyline points="712.00,149.00 715.50,153.00 719.00,149.00" fill="none" stroke="#333" stroke-width="1" stroke-linejoin="miter" stroke-linecap="butt"/>
<text transform="translate(712.53,145.50) rotate(-90) scale(1,1.08)" text-anchor="middle" font-size="7.8" fill="#4c4c54">7</text>
<path d="M710.9,160.0 Q715.5,165.2 720.1,160.0" fill="none" stroke="#333" stroke-width="0.9"/>
<text transform="translate(712.53,167.50) rotate(-90) scale(1,1.08)" text-anchor="middle" font-size="7.8" fill="#4c4c54">6</text>
<text transform="translate(727.23,174.50) rotate(-90) scale(1,1.08)" text-anchor="middle" font-size="7.8" fill="#4c4c54" text-decoration="underline">C230</text>
<text transform="translate(712.53,202.50) rotate(-90) scale(1,1.08)" text-anchor="middle" font-size="7.8" fill="#4c4c54">PNK/WHT</text>
<polyline points="715.50,162.60 715.50,900.00" fill="none" stroke="#c4a0a8" stroke-width="1.1" stroke-linejoin="miter" stroke-linecap="butt"/>
<path d="M176.9,400.4 A5.37,5.37 0 0 1 176.9,409.6" fill="none" stroke="#444" stroke-width="0.9"/>
<text transform="translate(181.50,401.83) scale(1,1.08)" text-anchor="start" font-size="7.8" fill="#4c4c54">1</text>
<text transform="translate(198.30,401.83) scale(1,1.08)" text-anchor="start" font-size="7.8" fill="#4c4c54">YEL/RED</text>
<path d="M176.9,413.21 A5.37,5.37 0 0 1 176.9,422.41" fill="none" stroke="#444" stroke-width="0.9"/>
<text transform="translate(181.50,414.64) scale(1,1.08)" text-anchor="start" font-size="7.8" fill="#4c4c54">2</text>
<text transform="translate(198.30,414.64) scale(1,1.08)" text-anchor="start" font-size="7.8" fill="#4c4c54">PNK</text>
<path d="M176.9,426.02 A5.37,5.37 0 0 1 176.9,435.22" fill="none" stroke="#444" stroke-width="0.9"/>
<text transform="translate(181.50,427.45) scale(1,1.08)" text-anchor="start" font-size="7.8" fill="#4c4c54">3</text>
<text transform="translate(198.30,427.45) scale(1,1.08)" text-anchor="start" font-size="7.8" fill="#4c4c54">GRN/YEL</text>
<path d="M176.9,438.83 A5.37,5.37 0 0 1 176.9,448.03000000000003" fill="none" stroke="#444" stroke-width="0.9"/>
<text transform="translate(181.50,440.26) scale(1,1.08)" text-anchor="start" font-size="7.8" fill="#4c4c54">4</text>
<text transform="translate(198.30,440.26) scale(1,1.08)" text-anchor="start" font-size="7.8" fill="#4c4c54">BLK/YEL</text>
<path d="M176.9,451.64 A5.37,5.37 0 0 1 176.9,460.84000000000003" fill="none" stroke="#444" stroke-width="0.9"/>
<text transform="translate(181.50,453.07) scale(1,1.08)" text-anchor="start" font-size="7.8" fill="#4c4c54">5</text>
<text transform="translate(198.30,453.07) scale(1,1.08)" text-anchor="start" font-size="7.8" fill="#4c4c54">BLK/ORG</text>
<path d="M176.9,464.45 A5.37,5.37 0 0 1 176.9,473.65000000000003" fill="none" stroke="#444" stroke-width="0.9"/>
<text transform="translate(181.50,465.88) scale(1,1.08)" text-anchor="start" font-size="7.8" fill="#4c4c54">6</text>
<text transform="translate(198.30,465.88) scale(1,1.08)" text-anchor="start" font-size="7.8" fill="#4c4c54">RED</text>
<path d="M176.9,477.26 A5.37,5.37 0 0 1 176.9,486.46000000000004" fill="none" stroke="#444" stroke-width="0.9"/>
<text transform="translate(181.50,478.69) scale(1,1.08)" text-anchor="start" font-size="7.8" fill="#4c4c54">7</text>
<text transform="translate(198.30,478.69) scale(1,1.08)" text-anchor="start" font-size="7.8" fill="#4c4c54">BLU</text>
<path d="M176.9,490.07 A5.37,5.37 0 0 1 176.9,499.27000000000004" fill="none" stroke="#444" stroke-width="0.9"/>
<text transform="translate(181.50,491.50) scale(1,1.08)" text-anchor="start" font-size="7.8" fill="#4c4c54">8</text>
<text transform="translate(198.30,491.50) scale(1,1.08)" text-anchor="start" font-size="7.8" fill="#4c4c54">BLK/YEL</text>
<path d="M176.9,502.88 A5.37,5.37 0 0 1 176.9,512.08" fill="none" stroke="#444" stroke-width="0.9"/>
<text transform="translate(181.50,504.31) scale(1,1.08)" text-anchor="start" font-size="7.8" fill="#4c4c54">9</text>
<text transform="translate(198.30,504.31) scale(1,1.08)" text-anchor="start" font-size="7.8" fill="#4c4c54">WHT/BLK</text>
<path d="M176.9,515.6899999999999 A5.37,5.37 0 0 1 176.9,524.89" fill="none" stroke="#444" stroke-width="0.9"/>
<text transform="translate(181.50,517.12) scale(1,1.08)" text-anchor="start" font-size="7.8" fill="#4c4c54">10</text>
<text transform="translate(198.30,517.12) scale(1,1.08)" text-anchor="start" font-size="7.8" fill="#4c4c54">RED/BLK</text>
<path d="M176.9,528.5 A5.37,5.37 0 0 1 176.9,537.7" fill="none" stroke="#444" stroke-width="0.9"/>
<text transform="translate(181.50,529.93) scale(1,1.08)" text-anchor="start" font-size="7.8" fill="#4c4c54">11</text>
<text transform="translate(198.30,529.93) scale(1,1.08)" text-anchor="start" font-size="7.8" fill="#4c4c54">WHT/BLU</text>
<path d="M176.9,541.31 A5.37,5.37 0 0 1 176.9,550.51" fill="none" stroke="#444" stroke-width="0.9"/>
<text transform="translate(181.50,542.74) scale(1,1.08)" text-anchor="start" font-size="7.8" fill="#4c4c54">12</text>
<text transform="translate(198.30,542.74) scale(1,1.08)" text-anchor="start" font-size="7.8" fill="#4c4c54">GRN</text>
<text transform="translate(181.50,555.53) scale(1,1.08)" text-anchor="start" font-size="7.8" fill="#4c4c54" text-decoration="underline">C252</text>
<text transform="translate(209.00,555.53) scale(1,1.08)" text-anchor="start" font-size="7.8" fill="#4c4c54">(CONN A)</text>
<path d="M176.9,579.0 A5.37,5.37 0 0 1 176.9,588.2" fill="none" stroke="#444" stroke-width="0.9"/>
<text transform="translate(181.50,580.43) scale(1,1.08)" text-anchor="start" font-size="7.8" fill="#4c4c54">1</text>
<text transform="translate(198.30,580.43) scale(1,1.08)" text-anchor="start" font-size="7.8" fill="#4c4c54">BLK/YEL</text>
<path d="M176.9,591.81 A5.37,5.37 0 0 1 176.9,601.01" fill="none" stroke="#444" stroke-width="0.9"/>
<text transform="translate(181.50,593.24) scale(1,1.08)" text-anchor="start" font-size="7.8" fill="#4c4c54">2</text>
<text transform="translate(198.30,593.24) scale(1,1.08)" text-anchor="start" font-size="7.8" fill="#4c4c54">ORG/WHT</text>
<path d="M176.9,604.62 A5.37,5.37 0 0 1 176.9,613.82" fill="none" stroke="#444" stroke-width="0.9"/>
<text transform="translate(181.50,606.05) scale(1,1.08)" text-anchor="start" font-size="7.8" fill="#4c4c54">3</text>
<text transform="translate(198.30,606.05) scale(1,1.08)" text-anchor="start" font-size="7.8" fill="#4c4c54">YEL/GRN</text>
<path d="M176.9,617.43 A5.37,5.37 0 0 1 176.9,626.63" fill="none" stroke="#444" stroke-width="0.9"/>
<text transform="translate(181.50,618.86) scale(1,1.08)" text-anchor="start" font-size="7.8" fill="#4c4c54">4</text>
<text transform="translate(198.30,618.86) scale(1,1.08)" text-anchor="start" font-size="7.8" fill="#4c4c54">YEL/RED</text>
<path d="M176.9,630.24 A5.37,5.37 0 0 1 176.9,639.44" fill="none" stroke="#444" stroke-width="0.9"/>
<text transform="translate(181.50,631.67) scale(1,1.08)" text-anchor="start" font-size="7.8" fill="#4c4c54">5</text>
<text transform="translate(198.30,631.67) scale(1,1.08)" text-anchor="start" font-size="7.8" fill="#4c4c54">LT GRN/RED</text>
<path d="M176.9,643.05 A5.37,5.37 0 0 1 176.9,652.25" fill="none" stroke="#444" stroke-width="0.9"/>
<text transform="translate(181.50,644.48) scale(1,1.08)" text-anchor="start" font-size="7.8" fill="#4c4c54">6</text>
<path d="M176.9,655.86 A5.37,5.37 0 0 1 176.9,665.0600000000001" fill="none" stroke="#444" stroke-width="0.9"/>
<text transform="translate(181.50,657.29) scale(1,1.08)" text-anchor="start" font-size="7.8" fill="#4c4c54">7</text>
<text transform="translate(198.30,657.29) scale(1,1.08)" text-anchor="start" font-size="7.8" fill="#4c4c54">BLK/GRN</text>
<path d="M176.9,668.67 A5.37,5.37 0 0 1 176.9,677.87" fill="none" stroke="#444" stroke-width="0.9"/>
<text transform="translate(181.50,670.10) scale(1,1.08)" text-anchor="start" font-size="7.8" fill="#4c4c54">8</text>
<text transform="translate(198.30,670.10) scale(1,1.08)" text-anchor="start" font-size="7.8" fill="#4c4c54">BLK/YEL</text>
<path d="M176.9,681.48 A5.37,5.37 0 0 1 176.9,690.6800000000001" fill="none" stroke="#444" stroke-width="0.9"/>
<text transform="translate(181.50,682.91) scale(1,1.08)" text-anchor="start" font-size="7.8" fill="#4c4c54">9</text>
<text transform="translate(198.30,682.91) scale(1,1.08)" text-anchor="start" font-size="7.8" fill="#4c4c54">YEL/PPL</text>
<path d="M176.9,694.29 A5.37,5.37 0 0 1 176.9,703.49" fill="none" stroke="#444" stroke-width="0.9"/>
<text transform="translate(181.50,695.72) scale(1,1.08)" text-anchor="start" font-size="7.8" fill="#4c4c54">10</text>
<text transform="translate(198.30,695.72) scale(1,1.08)" text-anchor="start" font-size="7.8" fill="#4c4c54">RED/WHT</text>
<path d="M176.9,707.1 A5.37,5.37 0 0 1 176.9,716.3000000000001" fill="none" stroke="#444" stroke-width="0.9"/>
<text transform="translate(181.50,708.53) scale(1,1.08)" text-anchor="start" font-size="7.8" fill="#4c4c54">11</text>
<text transform="translate(198.30,708.53) scale(1,1.08)" text-anchor="start" font-size="7.8" fill="#4c4c54">BLK</text>
<path d="M176.9,719.91 A5.37,5.37 0 0 1 176.9,729.11" fill="none" stroke="#444" stroke-width="0.9"/>
<text transform="translate(181.50,721.34) scale(1,1.08)" text-anchor="start" font-size="7.8" fill="#4c4c54">12</text>
<text transform="translate(198.30,721.34) scale(1,1.08)" text-anchor="start" font-size="7.8" fill="#4c4c54">GRN/WHT</text>
<path d="M176.9,732.72 A5.37,5.37 0 0 1 176.9,741.9200000000001" fill="none" stroke="#444" stroke-width="0.9"/>
<text transform="translate(181.50,734.15) scale(1,1.08)" text-anchor="start" font-size="7.8" fill="#4c4c54">13</text>
<text transform="translate(198.30,734.15) scale(1,1.08)" text-anchor="start" font-size="7.8" fill="#4c4c54">GRN/BLK</text>
<path d="M176.9,745.53 A5.37,5.37 0 0 1 176.9,754.73" fill="none" stroke="#444" stroke-width="0.9"/>
<text transform="translate(181.50,746.96) scale(1,1.08)" text-anchor="start" font-size="7.8" fill="#4c4c54">14</text>
<text transform="translate(198.30,746.96) scale(1,1.08)" text-anchor="start" font-size="7.8" fill="#4c4c54">GRN/RED</text>
<text transform="translate(181.50,760.53) scale(1,1.08)" text-anchor="start" font-size="7.8" fill="#4c4c54" text-decoration="underline">C253</text>
<text transform="translate(209.00,760.53) scale(1,1.08)" text-anchor="start" font-size="7.8" fill="#4c4c54">(CONN B)</text>
<path d="M176.9,783.68 A5.37,5.37 0 0 1 176.9,792.88" fill="none" stroke="#444" stroke-width="0.9"/>
<text transform="translate(181.50,785.11) scale(1,1.08)" text-anchor="start" font-size="7.8" fill="#4c4c54">1</text>
<path d="M176.9,796.4899999999999 A5.37,5.37 0 0 1 176.9,805.6899999999999" fill="none" stroke="#444" stroke-width="0.9"/>
<text transform="translate(181.50,797.92) scale(1,1.08)" text-anchor="start" font-size="7.8" fill="#4c4c54">2</text>
<path d="M176.9,809.3 A5.37,5.37 0 0 1 176.9,818.5" fill="none" stroke="#444" stroke-width="0.9"/>
<text transform="translate(181.50,810.73) scale(1,1.08)" text-anchor="start" font-size="7.8" fill="#4c4c54">3</text>
<text transform="translate(198.30,810.73) scale(1,1.08)" text-anchor="start" font-size="7.8" fill="#4c4c54">BLK/RED</text>
<path d="M176.9,822.1099999999999 A5.37,5.37 0 0 1 176.9,831.31" fill="none" stroke="#444" stroke-width="0.9"/>
<text transform="translate(181.50,823.54) scale(1,1.08)" text-anchor="start" font-size="7.8" fill="#4c4c54">4</text>
<text transform="translate(198.30,823.54) scale(1,1.08)" text-anchor="start" font-size="7.8" fill="#4c4c54">YEL</text>
<path d="M176.9,834.92 A5.37,5.37 0 0 1 176.9,844.12" fill="none" stroke="#444" stroke-width="0.9"/>
<text transform="translate(181.50,836.35) scale(1,1.08)" text-anchor="start" font-size="7.8" fill="#4c4c54">5</text>
<text transform="translate(198.30,836.35) scale(1,1.08)" text-anchor="start" font-size="7.8" fill="#4c4c54">BLK/GRN</text>
<polyline points="179.50,430.62 575.60,430.62 575.60,900.00" fill="none" stroke="#4c9a34" stroke-width="1.25" stroke-linejoin="miter" stroke-linecap="butt"/>
<polyline points="179.50,456.24 794.00,456.24" fill="none" stroke="#8e8070" stroke-width="1.5" stroke-linejoin="miter" stroke-linecap="butt"/>
<polyline points="179.50,469.05 422.00,469.05" fill="none" stroke="#d43c3c" stroke-width="1.6" stroke-linejoin="miter" stroke-linecap="butt"/>
<path d="M422,464.75 L429.6,469.05 L422,473.35 Z" fill="#000"/>
<text transform="translate(430.50,467.23) scale(1,1.08)" text-anchor="start" font-size="7.8" fill="#111" font-weight="bold">INTERIOR</text>
<text transform="translate(430.50,477.03) scale(1,1.08)" text-anchor="start" font-size="7.8" fill="#111" font-weight="bold">LIGHTS</text>
<polyline points="179.50,481.86 281.10,481.86 281.10,900.00" fill="none" stroke="#1c1c9c" stroke-width="1.6" stroke-linejoin="miter" stroke-linecap="butt"/>
<polyline points="179.50,507.48 255.00,507.48 255.00,900.00" fill="none" stroke="#c4c4c4" stroke-width="1.4" stroke-linejoin="miter" stroke-linecap="butt"/>
<polyline points="179.50,520.29 422.00,520.29" fill="none" stroke="#bc6262" stroke-width="1.5" stroke-linejoin="miter" stroke-linecap="butt"/>
<path d="M422,515.99 L429.6,520.29 L422,524.5899999999999 Z" fill="#000"/>
<text transform="translate(430.50,523.32) scale(1,1.08)" text-anchor="start" font-size="7.8" fill="#4c4c54">INTERIOR LIGHTS</text>
<polyline points="179.50,533.10 422.00,533.10" fill="none" stroke="#9090c4" stroke-width="1.2" stroke-linejoin="miter" stroke-linecap="butt"/>
<path d="M422,528.8000000000001 L429.6,533.1 L422,537.4 Z" fill="#000"/>
<text transform="translate(430.50,536.13) scale(1,1.08)" text-anchor="start" font-size="7.8" fill="#4c4c54">STARTING/CHARGING</text>
<polyline points="179.50,596.41 690.00,596.41" fill="none" stroke="#c8844e" stroke-width="1.4" stroke-linejoin="miter" stroke-linecap="butt"/>
<polyline points="179.50,609.22 371.40,609.22 371.40,379.40 870.00,379.40" fill="none" stroke="#e2e25a" stroke-width="1.8" stroke-linejoin="miter" stroke-linecap="butt"/>
<polyline points="179.50,622.03 804.50,622.03 804.50,686.08 870.00,686.08" fill="none" stroke="#eac47a" stroke-width="1.6" stroke-linejoin="miter" stroke-linecap="butt"/>
<polyline points="179.50,660.46 396.60,660.46 396.60,900.00" fill="none" stroke="#4c5248" stroke-width="1.4" stroke-linejoin="miter" stroke-linecap="butt"/>
<polyline points="179.50,686.08 740.60,686.08 740.60,900.00" fill="none" stroke="#f6cc98" stroke-width="1.6" stroke-linejoin="miter" stroke-linecap="butt"/>
<polyline points="179.50,698.89 422.00,698.89" fill="none" stroke="#d08484" stroke-width="1.6" stroke-linejoin="miter" stroke-linecap="butt"/>
<path d="M422,694.59 L429.6,698.89 L422,703.1899999999999 Z" fill="#000"/>
<text transform="translate(430.50,701.92) scale(1,1.08)" text-anchor="start" font-size="7.8" fill="#4c4c54">HEADLIGHTS</text>
<polyline points="179.50,711.70 690.30,711.70 690.30,900.00" fill="none" stroke="#505050" stroke-width="1.5" stroke-linejoin="miter" stroke-linecap="butt"/>
<polyline points="179.50,724.51 422.00,724.51" fill="none" stroke="#60a44c" stroke-width="1.4" stroke-linejoin="miter" stroke-linecap="butt"/>
<path d="M422,720.21 L429.6,724.51 L422,728.81 Z" fill="#000"/>
<polyline points="179.50,737.32 422.00,737.32" fill="none" stroke="#52a03e" stroke-width="1.4" stroke-linejoin="miter" stroke-linecap="butt"/>
<path d="M422,733.0200000000001 L429.6,737.32 L422,741.62 Z" fill="#000"/>
<polyline points="179.50,750.13 422.00,750.13" fill="none" stroke="#80845a" stroke-width="1.4" stroke-linejoin="miter" stroke-linecap="butt"/>
<path d="M422,745.83 L429.6,750.13 L422,754.43 Z" fill="#000"/>
<path d="M431,720.5 Q434,721 433.5,725 Q433.5,730 436,730.5 Q433.5,731 433.5,735.5 Q434,740 431,740.5" fill="none" stroke="#333" stroke-width="0.8"/>
<text transform="translate(436.50,728.83) scale(1,1.08)" text-anchor="start" font-size="7.8" fill="#4c4c54">EXTERIOR</text>
<text transform="translate(436.50,738.83) scale(1,1.08)" text-anchor="start" font-size="7.8" fill="#4c4c54">LIGHTS</text>
<text transform="translate(430.50,748.03) scale(1,1.08)" text-anchor="start" font-size="7.8" fill="#4c4c54">ENGINE</text>
<text transform="translate(430.50,757.53) scale(1,1.08)" text-anchor="start" font-size="7.8" fill="#4c4c54">CONTROLS</text>
<polyline points="179.50,813.90 422.00,813.90" fill="none" stroke="#806464" stroke-width="1.5" stroke-linejoin="miter" stroke-linecap="butt"/>
<path d="M422,809.6 L429.6,813.9 L422,818.1999999999999 Z" fill="#000"/>
<text transform="translate(430.50,812.03) scale(1,1.08)" text-anchor="start" font-size="7.8" fill="#4c4c54">STARTING/</text>
<text transform="translate(430.50,822.03) scale(1,1.08)" text-anchor="start" font-size="7.8" fill="#4c4c54">CHARGING</text>
<polyline points="179.50,826.71 319.30,826.71 319.30,900.00" fill="none" stroke="#f0ee70" stroke-width="1.9" stroke-linejoin="miter" stroke-linecap="butt"/>
<polyline points="179.50,839.52 384.00,839.52" fill="none" stroke="#4c5248" stroke-width="1.4" stroke-linejoin="miter" stroke-linecap="butt"/>
<rect x="876" y="356.3" width="44.3" height="47.7" fill="#dcdcff" stroke="#46465e" stroke-width="1.1"/>
<text transform="translate(920.00,323.03) scale(1,1.08)" text-anchor="end" font-size="7.8" fill="#4c4c54">(TOP OF COOLANT</text>
<text transform="translate(920.00,332.33) scale(1,1.08)" text-anchor="end" font-size="7.8" fill="#4c4c54">RESERVOIR)</text>
<text transform="translate(920.00,341.63) scale(1,1.08)" text-anchor="end" font-size="7.8" fill="#4c4c54">ENGINE COOLANT</text>
<text transform="translate(920.00,350.93) scale(1,1.08)" text-anchor="end" font-size="7.8" fill="#4c4c54">LEVEL SWITCH</text>
<path d="M872.9,361.65 A5.37,5.37 0 0 0 872.9,370.85" fill="none" stroke="#444" stroke-width="0.9"/>
<path d="M872.9,374.79999999999995 A5.37,5.37 0 0 0 872.9,384.0" fill="none" stroke="#444" stroke-width="0.9"/>
<path d="M872.9,387.4 A5.37,5.37 0 0 0 872.9,396.6" fill="none" stroke="#444" stroke-width="0.9"/>
<text transform="translate(861.50,362.33) scale(1,1.08)" text-anchor="end" font-size="7.8" fill="#4c4c54">BLK/YEL</text>
<text transform="translate(861.50,375.03) scale(1,1.08)" text-anchor="end" font-size="7.8" fill="#4c4c54">YEL/GRN</text>
<text transform="translate(861.50,388.03) scale(1,1.08)" text-anchor="end" font-size="7.8" fill="#4c4c54">BLK</text>
<polyline points="870.00,392.00 779.80,392.00 779.80,900.00" fill="none" stroke="#505050" stroke-width="1.5" stroke-linejoin="miter" stroke-linecap="butt"/>
<rect x="874.2" y="437.3" width="45.6" height="36.1" fill="#dcdcff" stroke="#46465e" stroke-width="1.1"/>
<polyline points="886.50,455.50 874.50,455.50" fill="none" stroke="#555" stroke-width="0.9" stroke-linejoin="miter" stroke-linecap="butt"/>
<polyline points="878.50,452.50 874.50,455.50 878.50,459.50" fill="none" stroke="#555" stroke-width="0.8" stroke-linejoin="miter" stroke-linecap="butt"/>
<circle cx="886.30" cy="455.90" r="1.4" fill="#1a1a2a"/>
<polyline points="886.50,455.50 905.50,467.50" fill="none" stroke="#22223a" stroke-width="1" stroke-linejoin="miter" stroke-linecap="butt"/>
<path d="M908.0,468.5 L902.7,464.1 L901.4000000000001,466.90000000000003 Z" fill="#1a1a2a"/>
<circle cx="908.00" cy="468.80" r="1.4" fill="#1a1a2a"/>
<circle cx="908.00" cy="443.60" r="1.4" fill="#1a1a2a"/>
<polyline points="908.00,443.60 919.80,443.60" fill="none" stroke="#22223a" stroke-width="1.2" stroke-linejoin="miter" stroke-linecap="butt"/>
<circle cx="919.80" cy="443.60" r="1.9" fill="#1a1a2a"/>
<path d="M922.1,438.6 L922.1,448.6 M924.1,440.6 L924.1,446.6 M926.5,442.6 L926.5,444.6" stroke="#333" stroke-width="1"/>
<path d="M872.9,451.65 A5.37,5.37 0 0 0 872.9,460.85" fill="none" stroke="#444" stroke-width="0.9"/>
<text transform="translate(845.00,453.23) scale(1,1.08)" text-anchor="middle" font-size="7.8" fill="#4c4c54">RED/WHT</text>
<polyline points="870.00,456.25 797.50,456.25" fill="none" stroke="#d08484" stroke-width="1.5" stroke-linejoin="miter" stroke-linecap="butt"/>
<path d="M795,452 Q791,456.25 795,460.5 M799,452 Q795,456.25 799,460.5" fill="none" stroke="#444" stroke-width="0.9"/>
<text transform="translate(775.00,452.73) scale(1,1.08)" text-anchor="end" font-size="7.8" fill="#4c4c54">BLK/ORG</text>
<text transform="translate(919.50,483.53) scale(1,1.08)" text-anchor="end" font-size="7.8" fill="#4c4c54">ENGINE COOLANT</text>
<text transform="translate(919.50,492.83) scale(1,1.08)" text-anchor="end" font-size="7.8" fill="#4c4c54">TEMPERATURE</text>
<text transform="translate(919.50,502.13) scale(1,1.08)" text-anchor="end" font-size="7.8" fill="#4c4c54">SENDER</text>
<text transform="translate(919.50,511.43) scale(1,1.08)" text-anchor="end" font-size="7.8" fill="#4c4c54">(LEFT SIDE</text>
<text transform="translate(919.50,520.73) scale(1,1.08)" text-anchor="end" font-size="7.8" fill="#4c4c54">OF ENGINE)</text>
<text transform="translate(784.00,561.03) scale(1,1.08)" text-anchor="start" font-size="7.8" fill="#4c4c54">(REAR HARN, NEAR</text>
<text transform="translate(784.00,570.33) scale(1,1.08)" text-anchor="start" font-size="7.8" fill="#4c4c54">BREAKOUT TO</text>
<text transform="translate(784.00,579.63) scale(1,1.08)" text-anchor="start" font-size="7.8" fill="#4c4c54">LEFT REAR SPKR)</text>
<text transform="translate(784.00,588.93) scale(1,1.08)" text-anchor="start" font-size="7.8" fill="#4c4c54">S411</text>
<polyline points="696.00,596.41 792.00,596.41" fill="none" stroke="#c03c28" stroke-width="1.5" stroke-linejoin="miter" stroke-linecap="butt"/>
<circle cx="792.30" cy="596.41" r="1.6" fill="#111"/>
<polyline points="799.00,596.41 870.00,596.41" fill="none" stroke="#d83838" stroke-width="1.9" stroke-dasharray="6,4" stroke-linejoin="miter" stroke-linecap="butt"/>
<path d="M872.9,591.81 A5.37,5.37 0 0 0 872.9,601.01" fill="none" stroke="#444" stroke-width="0.9"/>
<path d="M692,592.2099999999999 Q688,596.41 692,600.61 M696,592.2099999999999 Q692,596.41 696,600.61" fill="none" stroke="#444" stroke-width="0.9"/>
<text transform="translate(684.30,593.23) scale(1,1.08)" text-anchor="end" font-size="7.8" fill="#4c4c54">ORG/WHT</text>
<text transform="translate(774.50,593.23) scale(1,1.08)" text-anchor="end" font-size="7.8" fill="#4c4c54">RED/YEL</text>
<text transform="translate(864.00,593.23) scale(1,1.08)" text-anchor="end" font-size="7.8" fill="#4c4c54">RED/YEL</text>
<rect x="874" y="578.3" width="45.5" height="36" fill="#dcdcff" stroke="#46465e" stroke-width="1.1"/>
<polyline points="886.50,596.50 874.50,596.50" fill="none" stroke="#555" stroke-width="0.9" stroke-linejoin="miter" stroke-linecap="butt"/>
<polyline points="877.50,593.50 874.50,596.50 877.50,600.50" fill="none" stroke="#555" stroke-width="0.8" stroke-linejoin="miter" stroke-linecap="butt"/>
<circle cx="886.10" cy="596.90" r="1.4" fill="#1a1a2a"/>
<polyline points="886.50,596.50 905.50,608.50" fill="none" stroke="#22223a" stroke-width="1" stroke-linejoin="miter" stroke-linecap="butt"/>
<path d="M907.8,609.5 L902.5,605.0999999999999 L901.2,607.9 Z" fill="#1a1a2a"/>
<circle cx="907.80" cy="609.80" r="1.4" fill="#1a1a2a"/>
<circle cx="907.80" cy="584.60" r="1.4" fill="#1a1a2a"/>
<polyline points="907.80,584.60 919.60,584.60" fill="none" stroke="#22223a" stroke-width="1.2" stroke-linejoin="miter" stroke-linecap="butt"/>
<circle cx="919.60" cy="584.60" r="1.9" fill="#1a1a2a"/>
<path d="M921.9,579.5999999999999 L921.9,589.5999999999999 M923.9,581.5999999999999 L923.9,587.5999999999999 M926.3,583.5999999999999 L926.3,585.5999999999999" stroke="#333" stroke-width="1"/>
<text transform="translate(919.50,625.03) scale(1,1.08)" text-anchor="end" font-size="7.8" fill="#4c4c54">LIFTGATE</text>
<text transform="translate(919.50,634.33) scale(1,1.08)" text-anchor="end" font-size="7.8" fill="#4c4c54">LATCH SWITCH</text>
<text transform="translate(919.50,643.63) scale(1,1.08)" text-anchor="end" font-size="7.8" fill="#4c4c54">(AT REAR LATCH)</text>
<rect x="874" y="677" width="39.5" height="42.5" fill="#dcdcff" stroke="#6a6a7c" stroke-width="1.3" stroke-dasharray="5.5,2.8"/>
<path d="M872.9,681.48 A5.37,5.37 0 0 0 872.9,690.6800000000001" fill="none" stroke="#444" stroke-width="0.9"/>
<polyline points="876.00,686.08 894.00,686.08 894.00,711.70 804.50,711.70 804.50,788.75 870.00,788.75" fill="none" stroke="#eac47a" stroke-width="1.6" stroke-linejoin="miter" stroke-linecap="butt"/>
<polyline points="879.00,682.58 875.00,686.08 879.00,689.58" fill="none" stroke="#444" stroke-width="1" stroke-linejoin="miter" stroke-linecap="butt"/>
<text transform="translate(851.00,683.03) scale(1,1.08)" text-anchor="end" font-size="7.8" fill="#4c4c54">YEL/RED</text>
<text transform="translate(864.00,683.03) scale(1,1.08)" text-anchor="middle" font-size="7.8" fill="#4c4c54">3</text>
<text transform="translate(868.00,695.53) scale(1,1.08)" text-anchor="end" font-size="7.8" fill="#4c4c54" text-decoration="underline">C111</text>
<text transform="translate(866.00,708.03) scale(1,1.08)" text-anchor="end" font-size="7.8" fill="#4c4c54">YEL/RED</text>
<text transform="translate(913.00,730.03) scale(1,1.08)" text-anchor="end" font-size="7.8" fill="#4c4c54">ENGINE</text>
<text transform="translate(913.00,739.23) scale(1,1.08)" text-anchor="end" font-size="7.8" fill="#4c4c54">COMPARTMENT</text>
<text transform="translate(913.00,748.43) scale(1,1.08)" text-anchor="end" font-size="7.8" fill="#4c4c54">FUSE BOX</text>
<rect x="874" y="769.5" width="45.5" height="36" fill="#dcdcff" stroke="#46465e" stroke-width="1.1"/>
<polyline points="886.50,788.50 874.50,788.50" fill="none" stroke="#555" stroke-width="0.9" stroke-linejoin="miter" stroke-linecap="butt"/>
<polyline points="877.50,784.50 874.50,788.50 877.50,791.50" fill="none" stroke="#555" stroke-width="0.8" stroke-linejoin="miter" stroke-linecap="butt"/>
<circle cx="886.10" cy="788.10" r="1.4" fill="#1a1a2a"/>
<polyline points="886.50,788.50 905.50,799.50" fill="none" stroke="#22223a" stroke-width="1" stroke-linejoin="miter" stroke-linecap="butt"/>
<path d="M907.8,800.7 L902.5,796.3 L901.2,799.1 Z" fill="#1a1a2a"/>
<circle cx="907.80" cy="801.00" r="1.4" fill="#1a1a2a"/>
<circle cx="907.80" cy="775.80" r="1.4" fill="#1a1a2a"/>
<polyline points="907.80,775.80 919.60,775.80" fill="none" stroke="#22223a" stroke-width="1.2" stroke-linejoin="miter" stroke-linecap="butt"/>
<circle cx="919.60" cy="775.80" r="1.9" fill="#1a1a2a"/>
<path d="M921.9,770.8 L921.9,780.8 M923.9,772.8 L923.9,778.8 M926.3,774.8 L926.3,776.8" stroke="#333" stroke-width="1"/>
<path d="M872.9,784.15 A5.37,5.37 0 0 0 872.9,793.35" fill="none" stroke="#444" stroke-width="0.9"/>
<text transform="translate(864.00,784.03) scale(1,1.08)" text-anchor="end" font-size="7.8" fill="#4c4c54">YEL/RED</text>
<text transform="translate(919.50,816.03) scale(1,1.08)" text-anchor="end" font-size="7.8" fill="#4c4c54">ENGINE OIL</text>
<text transform="translate(919.50,825.33) scale(1,1.08)" text-anchor="end" font-size="7.8" fill="#4c4c54">PRESSURE</text>
<text transform="translate(919.50,834.63) scale(1,1.08)" text-anchor="end" font-size="7.8" fill="#4c4c54">SWITCH</text>
<text transform="translate(919.50,843.93) scale(1,1.08)" text-anchor="end" font-size="7.8" fill="#4c4c54">(LOWER REAR</text>
</g></svg></body></html>
